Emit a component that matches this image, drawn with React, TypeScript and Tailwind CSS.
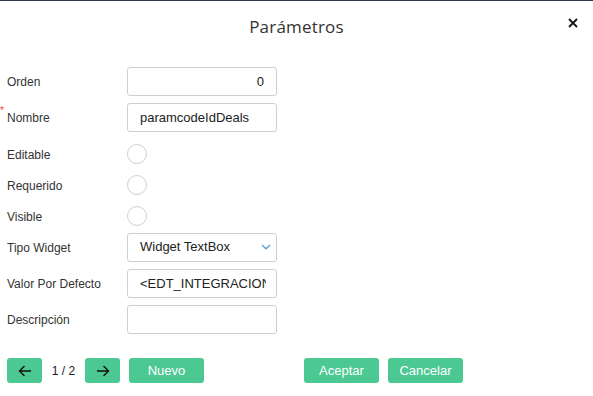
import React from "react";

const labelCls = "w-[120px] shrink-0 text-[12px] text-[#333] leading-[14px] mt-[2px]";
const inputCls =
  "w-[150px] h-[29px] border border-[#cfcfcf] rounded-[3px] bg-white text-[13px] text-[#222] px-[12px] outline-none";

function InputRow({ label, children, required }: { label: string; children: React.ReactNode; required?: boolean }) {
  return (
    <div className="flex items-center h-[36px]">
      <div className={labelCls + " relative"}>
        {required && (
          <span className="absolute left-[-7px] top-[-5px] text-[10px] leading-[10px] text-[#e53e3e]">*</span>
        )}
        {label}
      </div>
      {children}
    </div>
  );
}

function RadioRow({ label, extra }: { label: string; extra?: string }) {
  return (
    <div className={"flex items-center h-[31px] " + (extra ?? "")}>
      <div className={labelCls}>{label}</div>
      <div className="w-[20px] h-[20px] rounded-full border border-[#cfcfcf] bg-white" />
    </div>
  );
}

function Btn({ children, w }: { children: React.ReactNode; w: string }) {
  return (
    <button
      className={
        "h-[25px] rounded-[3px] bg-[#4cc993] text-white text-[13px] flex items-center justify-center " + w
      }
    >
      {children}
    </button>
  );
}

export default function App() {
  return (
    <div
      className="w-[593px] h-[396px] bg-white border-t border-[#2d3748] relative overflow-hidden"
      style={{ fontFamily: '"Liberation Sans", Arial, sans-serif' }}
    >
      <div className="h-[62px] pt-[15px] text-center">
        <span
          className="text-[17px] leading-[21px] text-[#333] font-normal tracking-[0.2px]"
          style={{ fontFamily: '"Open Sans", sans-serif' }}
        >
          Parámetros
        </span>
      </div>
      <button className="absolute right-[14px] top-[16px] w-[12px] h-[12px] flex items-center justify-center">
        <svg width="10" height="10" viewBox="0 0 10 10">
          <path d="M1 1 L9 9 M9 1 L1 9" stroke="#111" strokeWidth="1.8" />
        </svg>
      </button>

      <div className="px-[7px]">
        <InputRow label="Orden">
          <input className={inputCls + " text-right"} defaultValue="0" readOnly />
        </InputRow>
        <InputRow label="Nombre" required>
          <input className={inputCls} defaultValue="paramcodeIdDeals" readOnly />
        </InputRow>
        <RadioRow label="Editable" extra="mt-[3px]" />
        <RadioRow label="Requerido" />
        <RadioRow label="Visible" />
        <div className="-mt-[2px]">
          <InputRow label="Tipo Widget">
            <div className={inputCls + " flex items-center justify-between pr-[5px]"}>
              <span>Widget TextBox</span>
              <svg width="10" height="6" viewBox="0 0 10 6">
                <path d="M1 1 L5 4.8 L9 1" stroke="#5b9bd5" strokeWidth="1.3" fill="none" />
              </svg>
            </div>
          </InputRow>
        </div>
        <InputRow label="Valor Por Defecto">
          <input className={inputCls + " pr-[10px]"} defaultValue="<EDT_INTEGRACION>" readOnly />
        </InputRow>
        <InputRow label="Descripción">
          <input className={inputCls} defaultValue="" readOnly />
        </InputRow>

        <div className="flex items-center mt-[21px]">
          <Btn w="w-[35px]">
            <svg width="14" height="12" viewBox="0 0 14 12">
              <path d="M13 6 H1.5 M6.5 1 L1.5 6 L6.5 11" stroke="#111" strokeWidth="1.4" fill="none" />
            </svg>
          </Btn>
          <span className="w-[43px] text-center text-[12px] text-[#222]">1 / 2</span>
          <Btn w="w-[35px]">
            <svg width="14" height="12" viewBox="0 0 14 12">
              <path d="M1 6 H12.5 M7.5 1 L12.5 6 L7.5 11" stroke="#111" strokeWidth="1.4" fill="none" />
            </svg>
          </Btn>
          <div className="w-[9px]" />
          <Btn w="w-[75px]">Nuevo</Btn>
          <div className="w-[100px]" />
          <Btn w="w-[75px]">Aceptar</Btn>
          <div className="w-[9px]" />
          <Btn w="w-[75px]">Cancelar</Btn>
        </div>
      </div>
    </div>
  );
}
